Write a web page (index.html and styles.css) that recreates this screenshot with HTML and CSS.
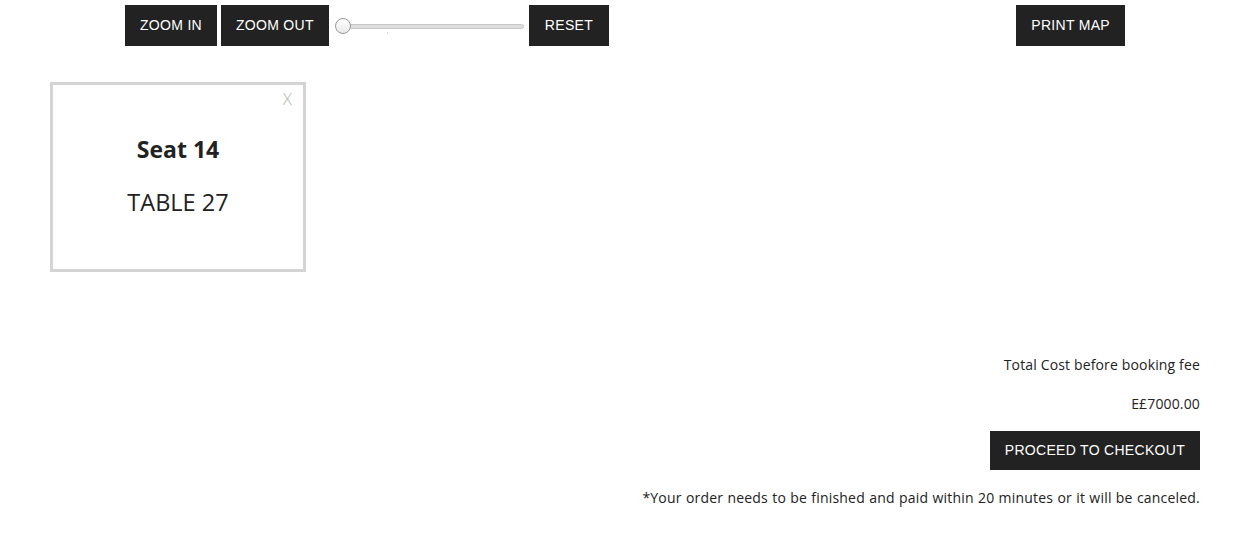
FILE: index.html
```
<!DOCTYPE html>
<html lang="en">
<head>
  <meta charset="UTF-8">
  <meta name="viewport" content="width=device-width, initial-scale=1.0">
  <title>Seat Map</title>
  <link rel="stylesheet" href="styles.css">
</head>
<body>
  <div class="toolbar">
    <button class="btn">ZOOM IN</button>
    <button class="btn">ZOOM OUT</button>
    <div class="slider">
      <div class="track"></div>
      <div class="tick"></div>
      <div class="knob"></div>
    </div>
    <button class="btn reset">RESET</button>
    <button class="btn print">PRINT MAP</button>
  </div>

  <div class="seat-card">
    <span class="close">X</span>
    <h3>Seat 14</h3>
    <p>TABLE 27</p>
  </div>

  <div class="summary">
    <p class="label">Total Cost before booking fee</p>
    <p class="price">E£7000.00</p>
    <button class="btn checkout">PROCEED TO CHECKOUT</button>
    <p class="note">*Your order needs to be finished and paid within 20 minutes or it will be canceled.</p>
  </div>
</body>
</html>
```

FILE: styles.css
```
body {
  margin: 0;
  font-family: "Open Sans", sans-serif;
  color: #222;
  background: #fff;
}
.btn {
  background-color: #222;
  color: #fff;
  border: none;
  font-family: "Liberation Sans", Arial, sans-serif;
  font-size: 14px;
  letter-spacing: 0.3px;
  line-height: 17px;
  padding: 12px 15px;
  cursor: pointer;
}
.toolbar {
  display: flex;
  align-items: center;
  gap: 4px;
  padding: 5px 122px 0 125px;
}
.toolbar .reset {
  padding: 12px 16px;
}
.toolbar .print {
  margin-left: auto;
}
.slider {
  position: relative;
  width: 189px;
  height: 41px;
  margin: 0 1px 0 2px;
}
.slider .track {
  position: absolute;
  left: 6px;
  right: 0;
  top: 19px;
  height: 3px;
  background: #ddd;
  border: 1px solid #c8c8c8;
  border-radius: 3px;
}
.slider .tick {
  position: absolute;
  left: 52px;
  top: 27px;
  width: 1px;
  height: 2px;
  background: #ddd;
}
.slider .knob {
  position: absolute;
  left: 0;
  top: 13px;
  width: 14px;
  height: 14px;
  border: 1px solid #999;
  border-radius: 50%;
  background: linear-gradient(#fff, #e8e8e8);
}
.seat-card {
  position: relative;
  width: 250px;
  height: 184px;
  margin: 36px 0 0 50px;
  border: 3px solid #d4d4d4;
  text-align: center;
}
.seat-card .close {
  position: absolute;
  top: 2px;
  right: 11px;
  color: #b5b5b5;
  font-size: 17px;
  font-weight: 300;
}
.seat-card h3 {
  margin: 48px 0 0;
  font-size: 23px;
  line-height: 32px;
  font-weight: 700;
}
.seat-card p {
  margin: 21px 0 0;
  font-size: 23.5px;
  line-height: 32px;
}
.summary {
  margin-top: 83px;
  padding-right: 47px;
  text-align: right;
}
.summary p {
  margin: 0;
  font-size: 14px;
  letter-spacing: 0.15px;
  line-height: 20px;
}
.summary .price {
  margin-top: 19px;
}
.summary .checkout {
  margin-top: 17px;
  padding: 11px 15px;
}
.summary .note {
  margin-top: 18px;
  letter-spacing: 0.2px;
  word-spacing: 0.4px;
}
```
